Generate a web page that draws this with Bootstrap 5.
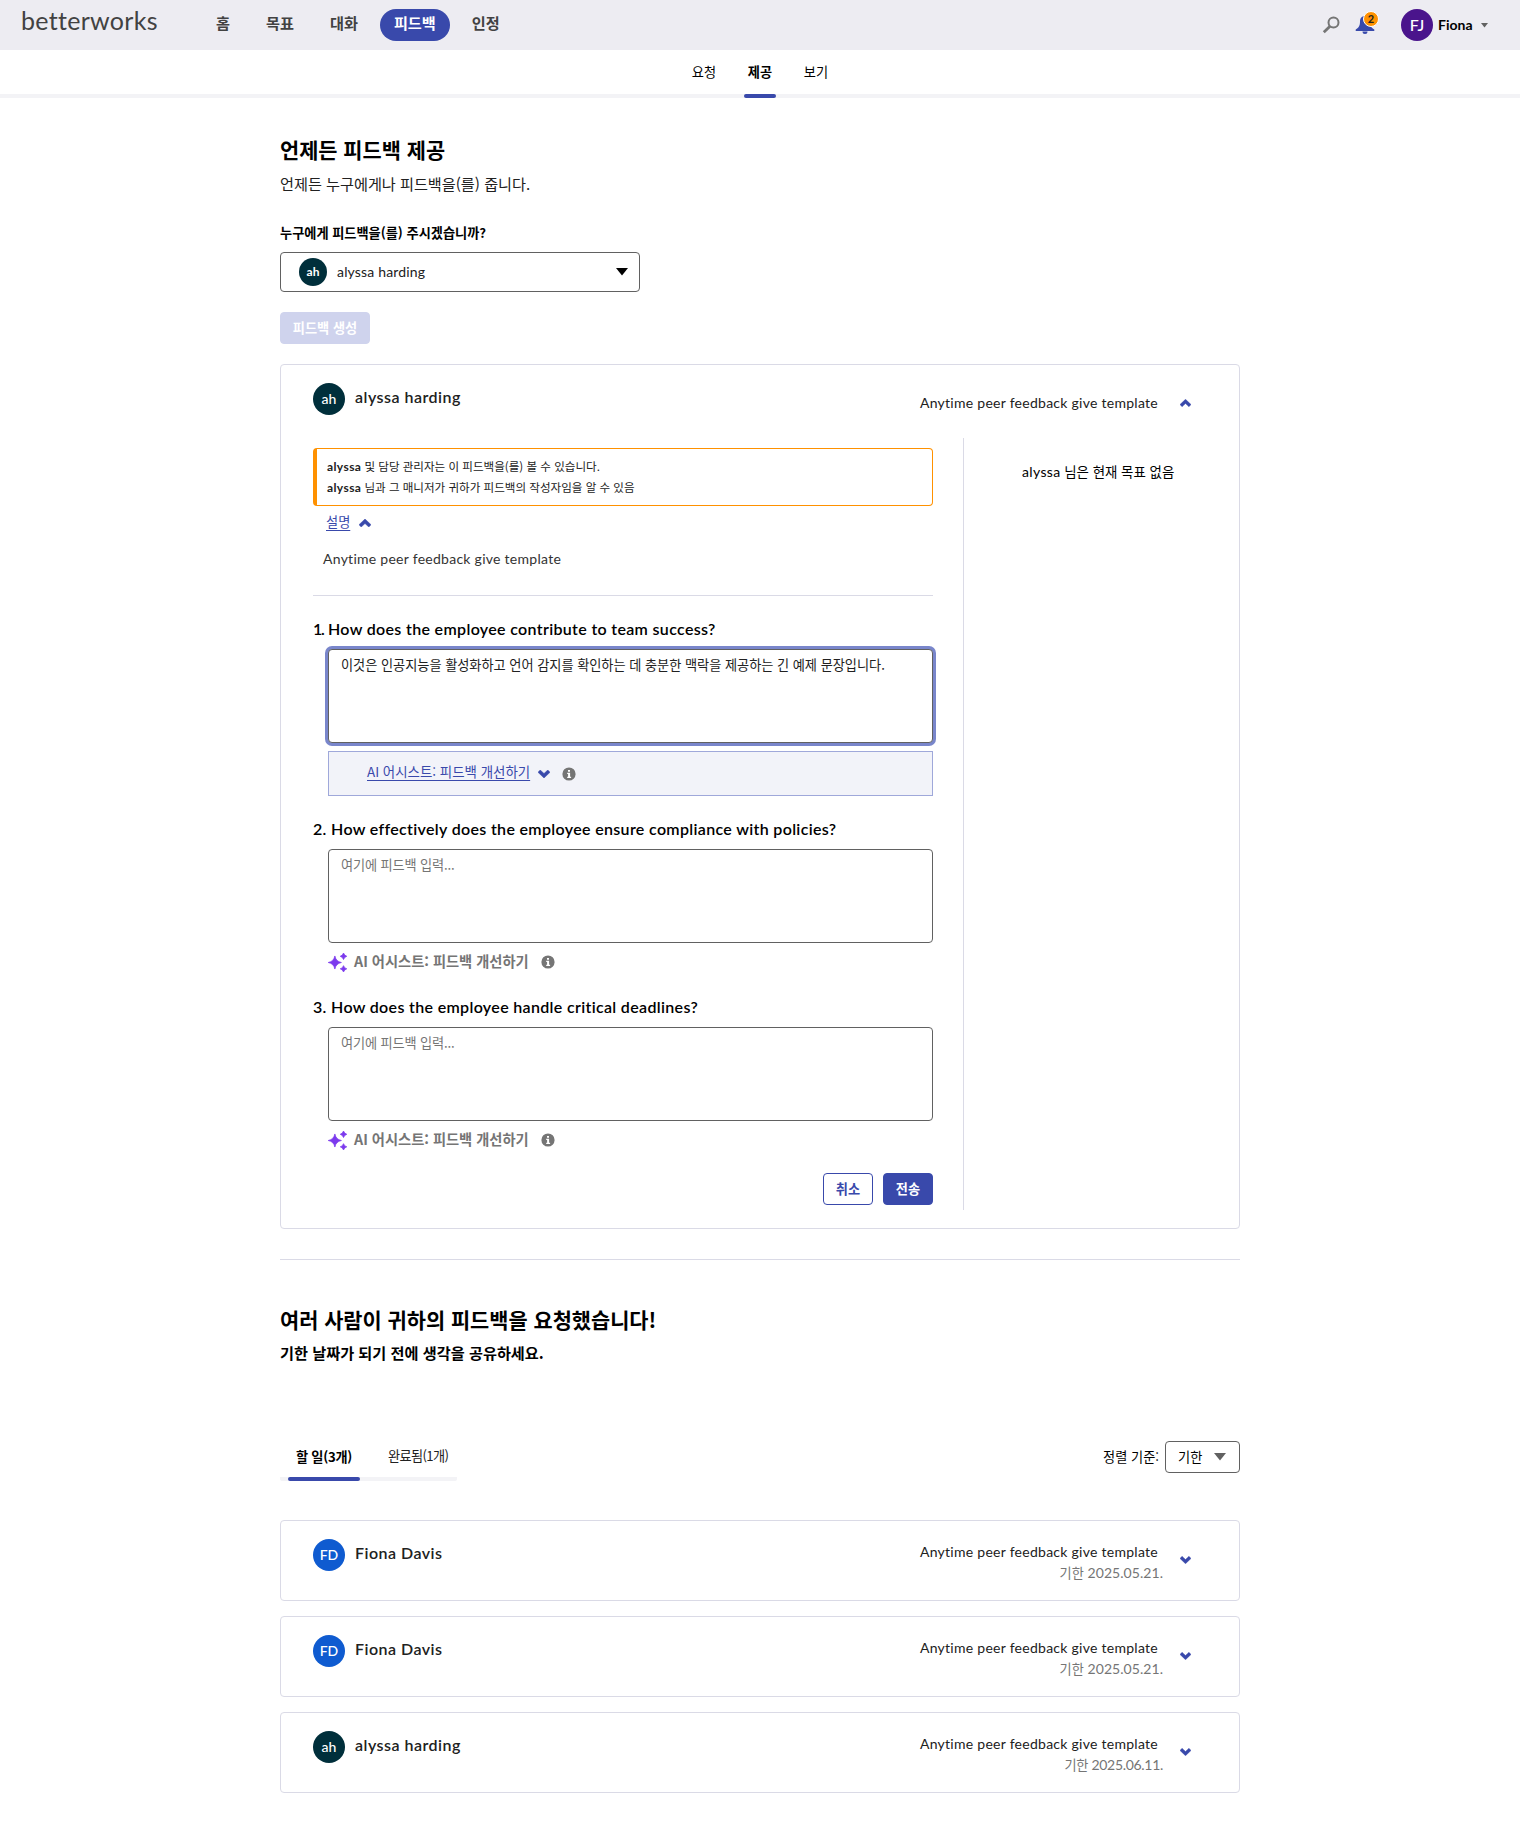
<!DOCTYPE html>
<html lang="ko">
<head>
<meta charset="utf-8">
<meta name="viewport" content="width=device-width, initial-scale=1">
<title>피드백 제공</title>
<link href="https://cdn.jsdelivr.net/npm/bootstrap@5.3.0/dist/css/bootstrap.min.css" rel="stylesheet">
<script src="https://cdn.jsdelivr.net/npm/bootstrap@5.3.0/dist/js/bootstrap.bundle.min.js" defer></script>
<style>
:root{--indigo:#3949ab;--line:#dadae6;--ink:#212121}
body{font-family:Lato,"Noto Sans CJK KR",sans-serif;font-size:14px;line-height:20px;color:#000;background:#fff}
.ko{font-family:"Noto Sans CJK KR",sans-serif;font-size:13.2px}
.ko16{font-family:"Noto Sans CJK KR",sans-serif;font-size:15.2px}
svg{display:block;flex:none}

/* top bar */
.topbar{height:50px;background:#edecf2;padding-left:21px}
.brand{width:181px;font-size:25px;font-weight:400;line-height:30px;color:#424242;letter-spacing:.3px;margin-top:-10px}
.mainnav{gap:8px}
.mainnav .nav-link{padding:0 14px;height:32px;line-height:27px;border-radius:16px;color:#424242;font-weight:700}
.mainnav .nav-link.active{background:var(--indigo);color:#fff}
.tools{padding-right:32px}
.bell{width:20px;height:20px;margin-left:15px}
.count{position:absolute;left:8px;top:-4px;width:16px;height:16px;border-radius:50%;background:#ff9100;border:1px solid #fff;font-size:11px;line-height:14px;color:#212121;text-align:center;font-weight:700}
.account{width:35px;margin-left:5px;margin-right:8px}
.face{width:32px;height:32px;border-radius:50%;color:#fff;font-size:14px;font-weight:500;display:flex;align-items:center;justify-content:center;flex:none}
.face-sm{width:28px;height:28px;font-size:12px;font-weight:700}
.face-me{font-size:16px;margin-left:26px}
.teal{background:#002f3b}.violet{background:#4a148c}.blue{background:#0f5bd0}

/* section tabs under the top bar */
.subnav{height:48px;border-bottom:4px solid #f3f3f6;gap:24px}
.subnav a{width:32px;height:48px;line-height:44px;text-align:center;color:#000;text-decoration:none;position:relative}
.subnav a.active{font-weight:700}
.subnav a.active::after{content:"";position:absolute;left:0;right:0;bottom:0;height:4px;border-radius:2px;background:var(--indigo)}

.page{width:960px;margin:0 auto;padding-top:36px}
.h-title{font-family:"Noto Sans CJK KR",sans-serif;font-size:20.85px;line-height:30px;font-weight:700;margin:0}
.lede{margin:9px 0 30px;color:var(--ink);letter-spacing:-.03px}
.picker{width:360px;height:40px;margin-top:9px;border:1px solid #616161;border-radius:4px;padding:0 11px 0 18px}
.picker-name{margin-left:10px;letter-spacing:.17px;color:var(--ink)}
.bw-btn{display:block;width:50px;height:32px;border-radius:4px;font-weight:700;line-height:26px;padding:0;border:1px solid var(--indigo);background:#fff;color:var(--indigo)}
.bw-btn.solid{background:var(--indigo);color:#fff}
.bw-btn.faded{width:90px;margin-top:20px;background:#cfd3ed;border-color:#cfd3ed;color:#fff}

/* feedback panel */
.panel{border:1px solid var(--line);border-radius:4px}
.panel-form{height:865px;margin-top:20px;padding-left:32px}
.panel-head{height:73px;padding:18px 48px 0 0}
.who{font-size:16px;font-weight:600;color:var(--ink);letter-spacing:.48px;margin:4px 0 0 10px}
.tpl{color:var(--ink);letter-spacing:.27px}
.panel-head .tpl{padding:10px 6px 0 0}
.form-col{width:620px;padding-top:10px}
.side{width:277px;height:772px;border-left:1px solid var(--line);margin-left:30px;padding:23px 0 0 58px}
.side .latin{letter-spacing:.35px}
.side .ko{font-size:13.45px}
.notice{border:1px solid #ff9100;border-left-width:4px;border-radius:4px;height:58px;padding:7px 10px;font-size:12px;color:var(--ink)}
.notice b{letter-spacing:.4px}
.notice .ko{font-size:11.55px}
.lnk{color:var(--indigo);text-decoration:underline;text-underline-offset:3px}
.about{margin:5px 0 0 13px;height:21px;gap:9px}
.about svg{margin-top:3px}
.intro{margin:17px 0 0 10px;color:#333}
.rule{height:1px;background:var(--line)}
.rule-form{margin:26px 0 23px}
.rule-page{margin:30px 0 44px}
.q{font-size:16px;font-weight:600;line-height:20px;letter-spacing:.33px;margin:0}
.one{letter-spacing:-1.2px}
.answer{display:block;width:605px;height:94px;margin:10px 0 0 15px;border:1px solid #616161;border-radius:4px;padding:5px 12px;resize:none;outline:0;color:var(--ink);line-height:20px;letter-spacing:-.03px}
.answer::placeholder{color:#757575;opacity:1;letter-spacing:-.15px}
.answer.focused{box-shadow:0 0 0 3px #7986cb}
.aibar{width:605px;height:45px;margin:8px 0 23px 15px;border:1px solid #9fa8da;background:#f2f3f9;padding-left:38px}
.aibar .lnk{font-size:13.45px;padding-bottom:5px}
.airow{margin:9px 0 25px 15px;height:20px;color:#757575;font-size:14.25px;font-weight:700}
.airow span{margin:-2px 12px 0 7px}
.actions{gap:10px;margin-top:-2px}

/* requests */
.toolbar-row{margin-top:75px;margin-bottom:39px;height:44px}
.tabs{width:177px;height:44px;border-bottom:4px solid #f3f3f6;border-radius:2px}
.tabs span{height:44px;line-height:40px}
.tabs .on{width:72px;margin-left:8px;padding-left:8px;font-weight:700;letter-spacing:-.25px;position:relative}
.tabs .on::after{content:"";position:absolute;left:0;right:0;bottom:0;height:4px;border-radius:2px;background:var(--indigo)}
.tabs .off{margin-left:28px;letter-spacing:-.65px;line-height:38px;color:var(--ink)}
.sorter{width:75px;height:32px;border:1px solid #616161;border-radius:4px;padding:0 13px 1px 12px;margin-left:6px}
.item{height:81px;margin-bottom:15px;padding:18px 48px 0 32px}
.item .meta{padding:3px 6px 0 0}
.item svg{margin-top:17px}
.due{color:#757575;margin:1px -5px 0 0;letter-spacing:.05px}
.due.tight{letter-spacing:-.3px}
</style>
</head>
<body>
<svg width="0" height="0" class="position-absolute">
<symbol id="up" viewBox="0 0 12 8"><path d="M0 5.700 6 0l6 5.700L9.800 8 6 4.500 2.200 8z" fill="#3949ab" stroke="#3949ab" stroke-width=".5"/></symbol>
<symbol id="down" viewBox="0 0 12 8"><path d="M0 2.300 6 8l6-5.700L9.800 0 6 3.500 2.200 0z" fill="#3949ab" stroke="#3949ab" stroke-width=".5"/></symbol>
<symbol id="info" viewBox="0 0 14 14"><circle cx="7" cy="7" r="6.600" fill="#757575"/><path d="M5.200 5.800h2.900v3.900h1V11H5.200V9.700h.9V7.100h-.9zM6 2.900h2v1.800H6z" fill="#fff"/></symbol>
<symbol id="stars" viewBox="0 0 18 18"><path d="M6.500 2.800Q7.500 8 12.700 9 7.500 10 6.500 15.200 5.500 10 .2 9 5.500 8 6.500 2.800zM14.700 0Q15.400 2.400 17.800 3.100 15.400 3.800 14.700 6.200 14 3.800 11.600 3.100 14 2.400 14.700 0zM14.700 12Q15.400 14.400 17.800 15 15.400 15.700 14.700 18 14 15.700 11.600 15 14 14.400 14.700 12z" fill="#7c3aed" stroke="#7c3aed" stroke-width=".7"/></symbol>
</svg>

<header class="topbar d-flex align-items-center">
  <div class="brand">betterworks</div>
  <nav class="nav mainnav ko16">
    <a class="nav-link">홈</a>
    <a class="nav-link">목표</a>
    <a class="nav-link">대화</a>
    <a class="nav-link active">피드백</a>
    <a class="nav-link">인정</a>
  </nav>
  <div class="tools d-flex align-items-center ms-auto">
    <svg width="18" height="18" viewBox="0 0 18 18" fill="none" stroke="#757575" stroke-width="2"><circle cx="11.500" cy="6.500" r="5"/><path d="M8 10.200 1.800 16.200" stroke-width="2.800"/></svg>
    <div class="bell position-relative">
      <svg width="20" height="20" viewBox="0 0 20 20"><path d="M10 1c-3.600 0-5 2.600-5 5.500 0 4-1 6-4.300 8v1.500h18.600v-1.500C16 12.500 15 10.500 15 6.500 15 3.600 13.600 1 10 1zM7.500 16.600a2.500 2.500 0 0 0 5 0z" fill="#3949ab"/></svg>
      <span class="count">2</span>
    </div>
    <div class="face face-me violet">FJ</div>
    <b class="account">Fiona</b>
    <svg width="7" height="5" viewBox="0 0 7 5"><path d="M0 0h7L3.500 4.500z" fill="#616161"/></svg>
  </div>
</header>

<nav class="subnav ko d-flex justify-content-center"><a>요청</a><a class="active">제공</a><a>보기</a></nav>

<main class="page">
  <h1 class="h-title">언제든 피드백 제공</h1>
  <p class="lede ko16">언제든 누구에게나 피드백을(를) 줍니다.</p>
  <p class="ko fw-bold mb-0">누구에게 피드백을(를) 주시겠습니까?</p>
  <div class="picker d-flex align-items-center">
    <div class="face face-sm teal">ah</div>
    <span class="picker-name">alyssa harding</span>
    <svg class="ms-auto" width="12" height="8" viewBox="0 0 12 8"><path d="M0 0h12L6 7.500z"/></svg>
  </div>
  <button class="bw-btn faded ko">피드백 생성</button>

  <section class="panel panel-form">
    <div class="panel-head d-flex">
      <div class="face teal">ah</div>
      <div class="who">alyssa harding</div>
      <div class="tpl ms-auto">Anytime peer feedback give template</div>
      <svg class="mt-3 ms-3" width="11" height="8"><use href="#up"/></svg>
    </div>
    <div class="d-flex">
      <div class="form-col">
        <div class="notice">
          <div><b>alyssa</b> <span class="ko">및 담당 관리자는 이 피드백을(를) 볼 수 있습니다.</span></div>
          <div><b>alyssa</b> <span class="ko">님과 그 매니저가 귀하가 피드백의 작성자임을 알 수 있음</span></div>
        </div>
        <div class="about d-flex align-items-center"><a class="lnk ko">설명</a><svg width="12" height="8"><use href="#up"/></svg></div>
        <p class="intro tpl mb-0">Anytime peer feedback give template</p>
        <div class="rule rule-form"></div>

        <p class="q"><span class="one">1.</span> How does the employee contribute to team success?</p>
        <textarea class="answer focused ko">이것은 인공지능을 활성화하고 언어 감지를 확인하는 데 충분한 맥락을 제공하는 긴 예제 문장입니다.</textarea>
        <div class="aibar d-flex align-items-center">
          <a class="lnk ko">AI 어시스트: 피드백 개선하기</a>
          <svg class="ms-2" width="12" height="8"><use href="#down"/></svg>
          <svg class="ms-2 ps-1" width="18" height="14"><use href="#info" width="14"/></svg>
        </div>

        <p class="q">2. How effectively does the employee ensure compliance with policies?</p>
        <textarea class="answer ko" placeholder="여기에 피드백 입력..."></textarea>
        <div class="airow ko d-flex align-items-center"><svg width="19" height="19"><use href="#stars"/></svg><span>AI 어시스트: 피드백 개선하기</span><svg width="14" height="14"><use href="#info"/></svg></div>

        <p class="q">3. How does the employee handle critical deadlines?</p>
        <textarea class="answer ko" placeholder="여기에 피드백 입력..."></textarea>
        <div class="airow ko d-flex align-items-center"><svg width="19" height="19"><use href="#stars"/></svg><span>AI 어시스트: 피드백 개선하기</span><svg width="14" height="14"><use href="#info"/></svg></div>

        <div class="actions d-flex justify-content-end"><button class="bw-btn ko">취소</button><button class="bw-btn solid ko">전송</button></div>
      </div>
      <div class="side"><span class="latin">alyssa</span> <span class="ko">님은 현재 목표 없음</span></div>
    </div>
  </section>

  <div class="rule rule-page"></div>

  <h2 class="h-title">여러 사람이 귀하의 피드백을 요청했습니다!</h2>
  <p class="ko16 fw-bold mb-0 mt-2">기한 날짜가 되기 전에 생각을 공유하세요.</p>

  <div class="toolbar-row d-flex justify-content-between">
    <div class="tabs ko d-flex"><span class="on">할 일(3개)</span><span class="off">완료됨(1개)</span></div>
    <div class="ko d-flex align-items-center pb-1">정렬 기준:<div class="sorter d-flex align-items-center justify-content-between">기한<svg width="12" height="8" viewBox="0 0 12 8"><path d="M0 0h12L6 7.500z" fill="#616161"/></svg></div></div>
  </div>

  <div class="panel item d-flex">
    <div class="face blue">FD</div><div class="who">Fiona Davis</div>
    <div class="meta ms-auto text-end"><div class="tpl">Anytime peer feedback give template</div><div class="due"><span class="ko">기한</span> 2025.05.21.</div></div>
    <svg class="ms-3" width="11" height="8"><use href="#down"/></svg>
  </div>
  <div class="panel item d-flex">
    <div class="face blue">FD</div><div class="who">Fiona Davis</div>
    <div class="meta ms-auto text-end"><div class="tpl">Anytime peer feedback give template</div><div class="due"><span class="ko">기한</span> 2025.05.21.</div></div>
    <svg class="ms-3" width="11" height="8"><use href="#down"/></svg>
  </div>
  <div class="panel item d-flex">
    <div class="face teal">ah</div><div class="who">alyssa harding</div>
    <div class="meta ms-auto text-end"><div class="tpl">Anytime peer feedback give template</div><div class="due tight"><span class="ko">기한</span> 2025.06.11.</div></div>
    <svg class="ms-3" width="11" height="8"><use href="#down"/></svg>
  </div>
</main>
</body>
</html>
